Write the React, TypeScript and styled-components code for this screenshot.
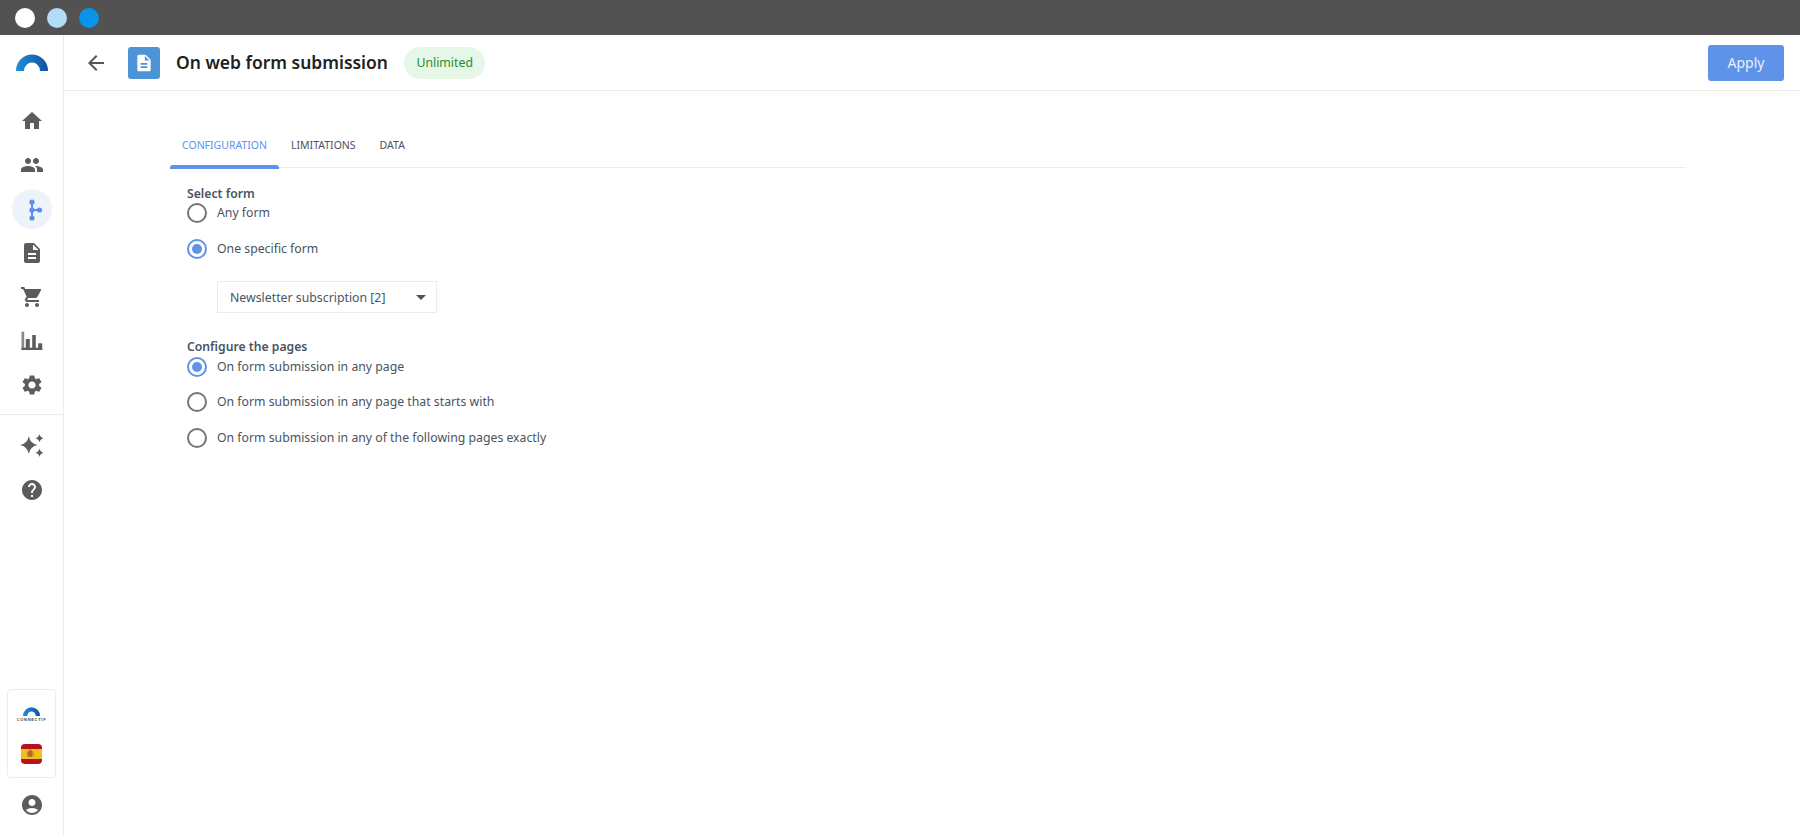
import React from "react";
import styled, { createGlobalStyle } from "styled-components";
import {
  MdHome,
  MdPeople,
  MdDescription,
  MdShoppingCart,
  MdSettings,
  MdHelp,
  MdAccountCircle,
  MdArrowBack,
} from "react-icons/md";

const Global = createGlobalStyle`
  html, body { margin: 0; padding: 0; height: 100%; background: #fff; }
  #root { height: 100%; }
  * { box-sizing: border-box; }
  body { font-family: "Noto Sans", "Lato", "Liberation Sans", sans-serif; color: #4a5361; }
`;

const Shell = styled.div`
  display: flex;
  flex-direction: column;
  height: 835px;
  overflow: hidden;
`;

const WindowBar = styled.div`
  flex: 0 0 35px;
  background: #525252;
  display: flex;
  align-items: center;
  gap: 12px;
  padding-left: 15px;
`;

const Dot = styled.span<{ $color: string }>`
  width: 20px;
  height: 20px;
  border-radius: 50%;
  background: ${(p) => p.$color};
`;

const Body = styled.div`
  flex: 1;
  display: flex;
  min-height: 0;
`;

const Sidebar = styled.aside`
  flex: 0 0 64px;
  border-right: 1px solid #ececec;
  display: flex;
  flex-direction: column;
  align-items: center;
`;

const LogoSlot = styled.div`
  height: 64px;
  flex: none;
  display: flex;
  align-items: flex-end;
  padding-bottom: 28px;
`;

const NavGroup = styled.nav`
  display: flex;
  flex-direction: column;
  align-items: center;
  width: 100%;
`;

const NavItem = styled.div<{ $active?: boolean }>`
  width: 40px;
  height: 40px;
  margin: 2px 0;
  border-radius: 50%;
  display: flex;
  align-items: center;
  justify-content: center;
  color: #5c5c5c;
  font-size: 24px;
  background: ${(p) => (p.$active ? "#eef2fb" : "transparent")};
`;

const NavDivider = styled.div`
  align-self: stretch;
  height: 1px;
  background: #ececec;
  margin: 7px 0 9px;
`;

const Spacer = styled.div`
  flex: 1;
`;

const BrandCard = styled.div`
  width: 49px;
  height: 89px;
  border: 1px solid #ececec;
  border-radius: 4px;
  display: flex;
  flex-direction: column;
  align-items: center;
  padding-top: 17px;
`;

const BrandName = styled.span`
  font-family: "Liberation Sans", sans-serif;
  font-size: 4px;
  font-weight: 700;
  line-height: 5px;
  letter-spacing: 0.7px;
  color: #444;
  margin-top: 1px;
`;

const FlagSlot = styled.div`
  margin-top: 22px;
  line-height: 0;
`;

const AccountSlot = styled.div`
  color: #5c5c5c;
  font-size: 24px;
  line-height: 0;
  margin: 15px 0 18px;
`;

const Main = styled.div`
  flex: 1;
  min-width: 0;
  display: flex;
  flex-direction: column;
`;

const Header = styled.header`
  flex: 0 0 56px;
  border-bottom: 1px solid #ececec;
  display: flex;
  align-items: center;
  padding: 0 16px 0 20px;
`;

const BackButton = styled.div`
  font-size: 24px;
  line-height: 0;
  color: #555;
`;

const DocBadge = styled.div`
  width: 32px;
  height: 32px;
  margin-left: 20px;
  border-radius: 3px;
  background: #4d94d6;
  color: #fff;
  font-size: 20px;
  display: flex;
  align-items: center;
  justify-content: center;
`;

const Title = styled.h1`
  margin: -2px 0 0 16px;
  font-size: 17.45px;
  font-weight: 600;
  color: #212121;
  white-space: nowrap;
`;

const StatusPill = styled.span`
  margin-left: 16px;
  height: 32px;
  padding: 0 12.5px;
  border-radius: 16px;
  background: #e6f7e8;
  color: #2b8c2b;
  font-size: 12.3px;
  display: flex;
  align-items: center;
`;

const ApplyButton = styled.button`
  margin-left: auto;
  width: 76px;
  height: 36px;
  border: none;
  border-radius: 3px;
  background: #5f93ea;
  color: #e9f0fd;
  font: inherit;
  font-size: 14px;
`;

const Content = styled.main`
  padding: 33px 114px 0 106px;
`;

const Tabs = styled.div`
  display: flex;
  border-bottom: 1px solid #ececec;
  height: 44px;
`;

const Tab = styled.div<{ $active?: boolean }>`
  position: relative;
  padding: 0 12px;
  height: 44px;
  display: flex;
  align-items: center;
  padding-bottom: 3px;
  font-size: 10.5px;
  color: ${(p) => (p.$active ? "#5f93ea" : "#4a5361")};
  ${(p) =>
    p.$active &&
    `&::after {
      content: "";
      position: absolute;
      left: 0;
      right: 0;
      bottom: -1px;
      height: 4px;
      border-radius: 3px 3px 0 0;
      background: #5f93ea;
    }`}
`;

const Form = styled.form`
  padding: 15px 0 0 17px;
`;

const SectionLabel = styled.div<{ $first?: boolean }>`
  height: 20px;
  line-height: ${(p) => (p.$first ? "22px" : "20px")};
  font-size: 12.2px;
  font-weight: 600;
  color: #4a5361;
`;

const RadioRow = styled.label`
  display: flex;
  align-items: center;
  height: 20px;
  gap: 10px;
  font-size: 12.27px;
  line-height: 19px;
  & + & {
    margin-top: 15.5px;
  }
`;

const RadioLabel = styled.span`
  margin-top: -1px;
`;

const RadioMark = styled.span<{ $on?: boolean }>`
  flex: none;
  width: 20px;
  height: 20px;
  border-radius: 50%;
  border: 2px solid ${(p) => (p.$on ? "#5f93ea" : "#757575")};
  display: flex;
  align-items: center;
  justify-content: center;
  &::after {
    content: "";
    width: 10px;
    height: 10px;
    border-radius: 50%;
    background: ${(p) => (p.$on ? "#5f93ea" : "transparent")};
  }
`;

const SelectBox = styled.div`
  width: 220px;
  height: 32px;
  margin: 22px 0 24px 30px;
  border: 1px solid #ececec;
  display: flex;
  align-items: center;
  justify-content: space-between;
  padding: 2px 10px 0 12px;
  font-size: 12.3px;
`;

const Caret = styled.span`
  width: 0;
  height: 0;
  border-left: 5px solid transparent;
  border-right: 5px solid transparent;
  border-top: 5px solid #4a5361;
`;

const FlowIcon = () => (
  <svg width="24" height="24" viewBox="0 0 24 24" fill="#5a8fee">
    <rect x="11" y="5" width="2" height="15" />
    <rect x="12" y="12" width="7" height="2" />
    <circle cx="12" cy="5" r="2.6" />
    <circle cx="12" cy="13" r="2.6" />
    <circle cx="12" cy="21" r="2.6" />
    <circle cx="19.5" cy="13" r="2.6" />
  </svg>
);

const ChartIcon = () => (
  <svg width="24" height="24" viewBox="0 0 24 24" fill="currentColor">
    <rect x="1.5" y="2.7" width="2.7" height="18.3" fill="#8a8a8a" />
    <rect x="5.8" y="10" width="4" height="11" />
    <rect x="12.2" y="6" width="3.6" height="15" />
    <rect x="18.2" y="14.3" width="4" height="6.7" />
    <rect x="1.5" y="18.7" width="20.7" height="2.3" />
  </svg>
);

const star = (cx: number, cy: number, r: number) => {
  const k = r * 0.16;
  return `M${cx} ${cy - r}Q${cx + k} ${cy - k} ${cx + r} ${cy}Q${cx + k} ${cy + k} ${cx} ${cy + r}Q${cx - k} ${cy + k} ${cx - r} ${cy}Q${cx - k} ${cy - k} ${cx} ${cy - r}Z`;
};

const SparkIcon = () => (
  <svg width="24" height="24" viewBox="0 0 24 24" fill="currentColor">
    <path d={star(8.8, 11, 8.8)} />
    <path d={star(19.5, 4.3, 4.2)} />
    <path d={star(19.5, 18.7, 4.2)} />
  </svg>
);

const Arch = ({ id, w, h }: { id: string; w: number; h: number }) => (
  <svg width={w} height={h} viewBox="0 0 32 17">
    <defs>
      <linearGradient id={id} x1="0" x2="1" y1="0" y2="0">
        <stop offset="0" stopColor="#2190d8" />
        <stop offset="1" stopColor="#1450a3" />
      </linearGradient>
    </defs>
    <path d="M0 17 A16 16.5 0 0 1 32 17 H24 A8 8.5 0 0 0 8 17 Z" fill={`url(#${id})`} />
  </svg>
);

const SpainFlag = () => (
  <svg width="21" height="20" viewBox="0 0 21 20">
    <rect width="21" height="20" rx="4" fill="#b5121b" />
    <rect y="5" width="21" height="10" fill="#f2bf1a" />
    <rect x="7" y="7" width="4.5" height="6" rx="1" fill="#b8672a" />
    <rect x="5.8" y="7.5" width="1" height="5" fill="#a8905a" />
    <rect x="11.8" y="7.5" width="1" height="5" fill="#a8905a" />
    <rect x="7.7" y="5.6" width="3" height="1.6" fill="#c8703a" />
  </svg>
);

const Radio = ({ on, children }: { on?: boolean; children: React.ReactNode }) => (
  <RadioRow>
    <RadioMark $on={on} />
    <RadioLabel>{children}</RadioLabel>
  </RadioRow>
);

export default function App() {
  return (
    <Shell>
      <Global />
      <WindowBar>
        <Dot $color="#ffffff" />
        <Dot $color="#b3dcf7" />
        <Dot $color="#0a93e8" />
      </WindowBar>
      <Body>
        <Sidebar>
          <LogoSlot>
            <Arch id="logoA" w={32} h={17} />
          </LogoSlot>
          <NavGroup>
            <NavItem><MdHome /></NavItem>
            <NavItem><MdPeople /></NavItem>
            <NavItem $active><FlowIcon /></NavItem>
            <NavItem><MdDescription /></NavItem>
            <NavItem><MdShoppingCart /></NavItem>
            <NavItem><ChartIcon /></NavItem>
            <NavItem><MdSettings /></NavItem>
            <NavDivider />
            <NavItem><SparkIcon /></NavItem>
            <NavItem><MdHelp /></NavItem>
          </NavGroup>
          <Spacer />
          <BrandCard>
            <Arch id="logoB" w={17} h={9} />
            <BrandName>CONNECTIF</BrandName>
            <FlagSlot><SpainFlag /></FlagSlot>
          </BrandCard>
          <AccountSlot><MdAccountCircle /></AccountSlot>
        </Sidebar>
        <Main>
          <Header>
            <BackButton><MdArrowBack /></BackButton>
            <DocBadge><MdDescription /></DocBadge>
            <Title>On web form submission</Title>
            <StatusPill>Unlimited</StatusPill>
            <ApplyButton>Apply</ApplyButton>
          </Header>
          <Content>
            <Tabs>
              <Tab $active>CONFIGURATION</Tab>
              <Tab>LIMITATIONS</Tab>
              <Tab>DATA</Tab>
            </Tabs>
            <Form>
              <SectionLabel $first>Select form</SectionLabel>
              <Radio>Any form</Radio>
              <Radio on>One specific form</Radio>
              <SelectBox>
                Newsletter subscription [2]
                <Caret />
              </SelectBox>
              <SectionLabel>Configure the pages</SectionLabel>
              <Radio on>On form submission in any page</Radio>
              <Radio>On form submission in any page that starts with</Radio>
              <Radio>On form submission in any of the following pages exactly</Radio>
            </Form>
          </Content>
        </Main>
      </Body>
    </Shell>
  );
}
